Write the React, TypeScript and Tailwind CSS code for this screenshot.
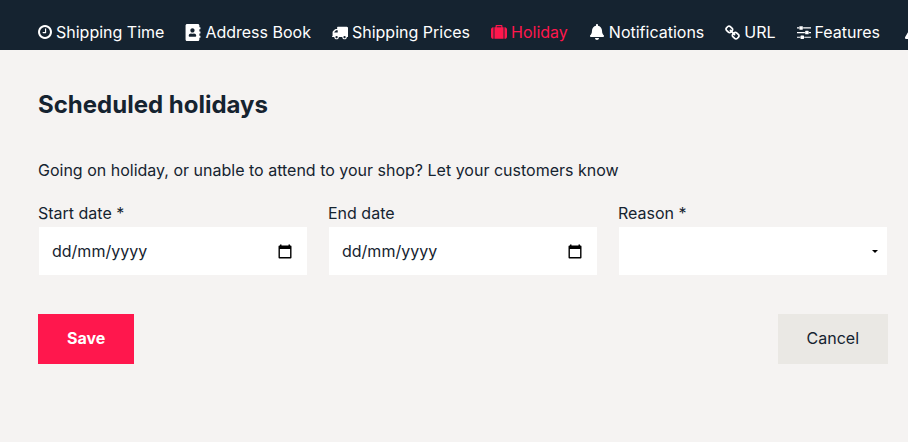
import React, { useState } from 'react'
import { FaAddressBook, FaBell, FaExclamationTriangle } from 'react-icons/fa'

function ClockIcon() {
  return (
    <svg viewBox="0 128 1536 1536" className="h-[14px] w-[14px]" fill="currentColor" aria-hidden="true">
      <path d="M896 544v448q0 14-9 23t-23 9h-320q-14 0-23-9t-9-23v-64q0-14 9-23t23-9h224v-352q0-14 9-23t23-9h64q14 0 23 9t9 23zm416 352q0-148-73-273t-198-198-273-73-273 73-198 198-73 273 73 273 198 198 273 73 273-73 198-198 73-273zm224 0q0 209-103 385.5t-279.5 279.5-385.5 103-385.5-103-279.5-279.5-103-385.5 103-385.5 279.5-279.5 385.5-103 385.5 103 279.5 279.5 103 385.5z" />
    </svg>
  )
}

function TruckIcon() {
  return (
    <svg viewBox="0 64 1792 1664" className="h-[15px] w-[16px]" fill="currentColor" aria-hidden="true">
      <path d="M640 1408q0-52-38-90t-90-38-90 38-38 90 38 90 90 38 90-38 38-90zM256 896h384V640H482q-13 0-22 9L265 844q-9 9-9 22v30zm1280 512q0-52-38-90t-90-38-90 38-38 90 38 90 90 38 90-38 38-90zM1792 320v1024q0 15-4 26.5t-13.5 18.5-16.5 11.5-23.5 6-22.5 2-25.5 0-22.5-.5q0 106-75 181t-181 75-181-75-75-181H768q0 106-75 181t-181 75-181-75-75-181h-64q-3 0-22.5.5t-25.5 0-22.5-2-23.5-6-16.5-11.5T4 1370.5 0 1344q0-26 19-45t45-19V960q0-8-.5-35t0-38 2.5-34.5 6.5-37 14-30.5 22.5-30l198-198q19-19 50.5-32t58.5-13h160V320q0-26 19-45t45-19h1024q26 0 45 19t19 45z" />
    </svg>
  )
}

function SuitcaseIcon() {
  return (
    <svg viewBox="0 0 1792 1664" className="h-[15px] w-[16px]" fill="currentColor" aria-hidden="true">
      <path d="M640 256h512V128H640v128zM288 256v1280h-64q-92 0-158-66T0 1312V480q0-92 66-158t158-66h64zm1120 0v1280H384V256h128V96q0-40 28-68t68-28h576q40 0 68 28t28 68v160h128zm384 224v832q0 92-66 158t-158 66h-64V256h64q92 0 158 66t66 158z" />
    </svg>
  )
}

function LinkIcon() {
  return (
    <svg viewBox="0 0 1664 1664" className="h-[15px] w-[15px]" fill="currentColor" aria-hidden="true">
      <path d="M1456 1216q0-40-28-68l-208-208q-28-28-68-28-42 0-72 32 3 3 19 18.5t21.5 21.5 15 19 13 25.5 3.5 27.5q0 40-28 68t-68 28q-15 0-27.5-3.5t-25.5-13-19-15-21.5-21.5-18.5-19q-33 31-33 73 0 40 28 68l206 207q27 27 68 27 40 0 68-26l147-146q28-28 28-67zM753 511q0-40-28-68L519 236q-28-28-68-28-39 0-68 27L236 381q-28 28-28 67 0 40 28 68l208 208q27 27 68 27 42 0 72-31-3-3-19-18.5t-21.5-21.5-15-19-13-25.5-3.5-27.5q0-40 28-68t68-28q15 0 27.5 3.5t25.5 13 19 15 21.5 21.5 18.5 19q33-31 33-73zm895 705q0 120-85 203l-147 146q-83 83-203 83-121 0-204-85l-206-207q-83-83-83-203 0-123 88-209l-88-88q-86 88-208 88-120 0-204-84L100 652Q16 568 16 448t85-203L248 99q83-83 203-83 121 0 204 85l206 207q83 83 83 203 0 123-88 209l88 88q86-88 208-88 120 0 204 84l208 208q84 84 84 204z" />
    </svg>
  )
}

function SlidersIcon() {
  return (
    <svg viewBox="0 128 1536 1536" className="h-[14px] w-[14px]" fill="currentColor" aria-hidden="true">
      <path d="M352 1408v128H0v-128h352zm352-128q26 0 45 19t19 45v256q0 26-19 45t-45 19H448q-26 0-45-19t-19-45v-256q0-26 19-45t45-19h256zm160-384v128H0V896h864zM224 384v128H0V384h224zm1312 1024v128H800v-128h736zM576 256q26 0 45 19t19 45v256q0 26-19 45t-45 19H320q-26 0-45-19t-19-45V320q0-26 19-45t45-19h256zm640 512q26 0 45 19t19 45v256q0 26-19 45t-45 19H960q-26 0-45-19t-19-45V832q0-26 19-45t45-19h256zm320 128v128h-224V896h224zm0-512v128H672V384h864z" />
    </svg>
  )
}

function CalendarIcon() {
  return (
    <svg viewBox="0 0 14 15" className="h-[15px] w-[14px]" aria-hidden="true">
      <path fill="#000" fillRule="evenodd" d="M2 0.500h1.500v1h7v-1H12v1h0.500q1 0 1 1v11q0 1-1 1h-11q-1 0-1-1v-11q0-1 1-1H2zM1.900 5v8h10.200V5z" />
    </svg>
  )
}

const tabs = [
  { label: 'Shipping Time', icon: <ClockIcon /> },
  { label: 'Address Book', icon: <FaAddressBook className="h-[17px] w-[16px]" /> },
  { label: 'Shipping Prices', icon: <TruckIcon /> },
  { label: 'Holiday', icon: <SuitcaseIcon /> },
  { label: 'Notifications', icon: <FaBell className="h-4 w-4" /> },
  { label: 'URL', icon: <LinkIcon /> },
  { label: 'Features', icon: <SlidersIcon /> },
]

type DateFieldProps = {
  id: string
  label: string
  value: string
  onChange: (value: string) => void
}

function DateField({ id, label, value, onChange }: DateFieldProps) {
  return (
    <div>
      <label htmlFor={id} className="block">{label}</label>
      <div className="mx-px mt-[2px] flex h-12 items-center bg-white px-[13px]">
        <input
          id={id}
          type="text"
          placeholder="dd/mm/yyyy"
          value={value}
          onChange={(e) => onChange(e.target.value)}
          className="w-full min-w-0 flex-1 bg-transparent outline-none placeholder:text-[#152330]"
        />
        <button type="button" aria-label={`Pick ${label}`} className="mr-[2px] shrink-0">
          <CalendarIcon />
        </button>
      </div>
    </div>
  )
}

export default function App() {
  const [activeTab, setActiveTab] = useState('Holiday')
  const [startDate, setStartDate] = useState('')
  const [endDate, setEndDate] = useState('')
  const [reason, setReason] = useState('')

  return (
    <div className="min-h-screen bg-[#f5f3f2] font-['Inter','Liberation_Sans',sans-serif] text-base text-[#152330]">
      <nav className="flex h-[50px] gap-[21px] overflow-hidden bg-[#152330] pt-[20px] pl-[38px] text-white">
        {tabs.map((tab) => (
          <a
            key={tab.label}
            href="#"
            onClick={() => setActiveTab(tab.label)}
            className={`flex h-6 shrink-0 items-center gap-1 whitespace-nowrap ${
              activeTab === tab.label ? 'text-[#ff174d]' : ''
            }`}
          >
            {tab.icon}
            {tab.label}
          </a>
        ))}
        <a href="#" aria-label="Warnings" className="ml-1 flex h-6 shrink-0 items-center">
          <FaExclamationTriangle className="h-4 w-4" />
        </a>
      </nav>

      <main className="pt-[37px] pr-5 pl-[38px]">
        <h1 className="text-2xl leading-9 font-bold">Scheduled holidays</h1>
        <p className="mt-[35px]">Going on holiday, or unable to attend to your shop? Let your customers know</p>

        <form onSubmit={(e) => e.preventDefault()}>
          <div className="mt-[19px] grid grid-cols-3 gap-5">
            <DateField id="start" label="Start date *" value={startDate} onChange={setStartDate} />
            <DateField id="end" label="End date" value={endDate} onChange={setEndDate} />
            <div>
              <label htmlFor="reason" className="block">Reason *</label>
              <div className="relative mx-px mt-[2px]">
                <select
                  id="reason"
                  value={reason}
                  onChange={(e) => setReason(e.target.value)}
                  className="block h-12 w-full appearance-none bg-white px-[13px] outline-none"
                >
                  <option value=""></option>
                </select>
                <svg viewBox="0 0 6 3" className="pointer-events-none absolute top-[23px] right-[9px] h-[3px] w-[6px]" aria-hidden="true">
                  <path d="M0 0h6L3 3z" fill="#000" />
                </svg>
              </div>
            </div>
          </div>

          <div className="mt-[39px] flex justify-between">
            <button type="submit" className="h-[50px] bg-[#ff174d] px-[29px] pb-[2px] font-bold text-white">Save</button>
            <button type="button" className="h-[50px] bg-[#eae8e4] px-[29px] pb-[2px]">Cancel</button>
          </div>
        </form>
      </main>
    </div>
  )
}
